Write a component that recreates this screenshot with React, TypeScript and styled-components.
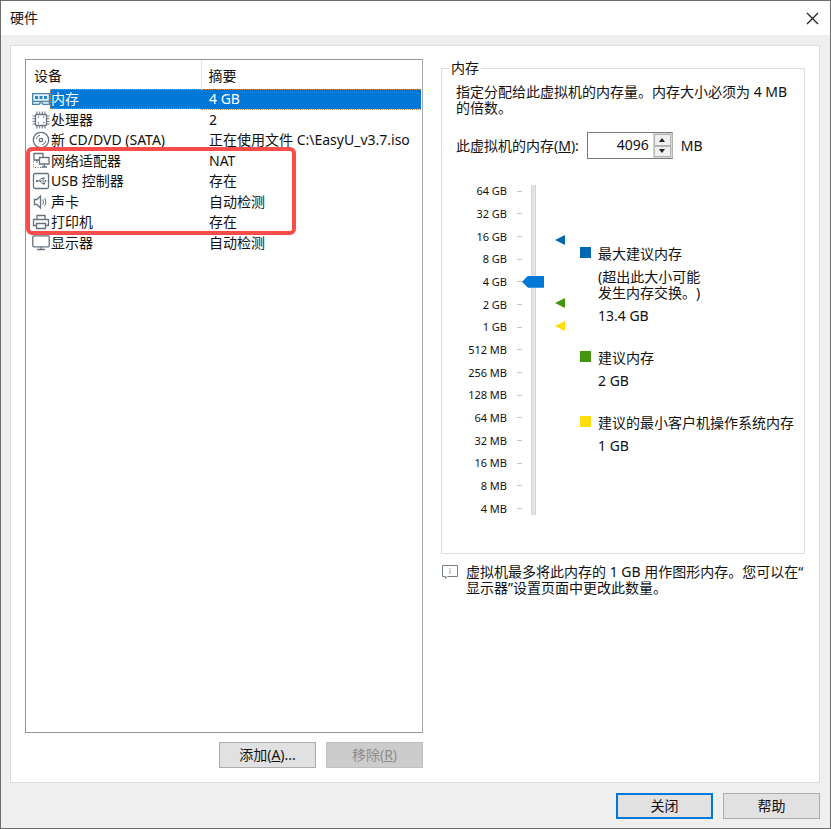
import React, { useState } from "react";
import styled, { createGlobalStyle, css } from "styled-components";

const GlobalStyle = createGlobalStyle`
  * { box-sizing: border-box; }
  body { margin: 0; }
  body, button, input {
    font-family: "Noto Sans", "Noto Sans CJK SC", sans-serif;
    font-size: 14px;
    line-height: 16px;
    color: #111;
    text-spacing-trim: space-all;
  }
`;

const Dialog = styled.main`
  display: flex;
  flex-direction: column;
  min-height: 100vh;
  background: #efefef;
  border: 1px solid #6c6c6c;
`;

const TitleBar = styled.header`
  display: flex;
  align-items: center;
  justify-content: space-between;
  height: 34px;
  padding: 0 11px 0 9px;
  background: #fff;
`;

const Title = styled.h1`
  margin: 0;
  font-size: 14px;
  font-weight: 400;
`;

const CloseIconButton = styled.button`
  display: flex;
  padding: 0;
  border: 0;
  background: none;
`;

const Panel = styled.div`
  flex: 1;
  display: grid;
  grid-template-columns: minmax(0, 398fr) minmax(0, 364fr);
  gap: 18px;
  margin: 10px 10px 0 9px;
  padding: 13px 14px 14px;
  background: #fff;
  border: 1px solid #dcdcdc;
`;

const DeviceColumn = styled.section`
  display: flex;
  flex-direction: column;
  gap: 9px;
`;

const DeviceList = styled.div`
  position: relative;
  flex: 1;
  border: 1px solid #8b929b;
  border-right-color: #a4a9b0;
  padding: 0 1px;
`;

const DeviceTable = styled.table`
  width: 100%;
  border-collapse: collapse;
  table-layout: fixed;
  white-space: nowrap;
`;

const HeadCell = styled.th<{ $divided?: boolean }>`
  height: 29px;
  padding: 3px 7px 0;
  font-weight: 400;
  text-align: left;
  ${(p) => p.$divided && css`border-left: 1px solid #e2e2e2;`}
`;

const DeviceRow = styled.tr`
  height: 20px;
  &:nth-child(even) { height: 21px; }
`;

const NameCell = styled.td`
  padding: 0 0 0 5px;
`;

const NameLine = styled.div`
  display: flex;
  align-items: center;
`;

const DeviceName = styled.span<{ $selected?: boolean }>`
  flex: 1;
  padding: 2px 0 2px 1px;
  ${(p) => p.$selected && css`
    color: #fff;
    background: #0078d7;
    outline: 1px dotted #d58a4a;
    outline-offset: -1px;
    clip-path: inset(0 1px 0 0);
    margin-right: -1px;
  `}
`;

const SummaryCell = styled.td<{ $selected?: boolean }>`
  padding: 0 0 0 8px;
  ${(p) => p.$selected && css`
    color: #fff;
    background: #0078d7;
    border-top: 1px dotted #d58a4a;
    border-bottom: 1px dotted #d58a4a;
  `}
`;

const Highlight = styled.div`
  position: absolute;
  left: 0;
  top: 87px;
  width: 270px;
  height: 88px;
  border: 4px solid #fa4c49;
  border-radius: 6px;
  pointer-events: none;
`;

const ButtonRow = styled.div`
  display: flex;
  justify-content: flex-end;
  gap: 10px;
`;

const PushButton = styled.button<{ $primary?: boolean }>`
  width: 97px;
  height: 26px;
  padding: 0;
  background: #e1e1e1;
  border: ${(p) => (p.$primary ? "2px solid #0078d7" : "1px solid #adadad")};
  &:disabled {
    color: #8c8c8c;
    background: #cccccc;
    border-color: #bfbfbf;
  }
`;

const Footer = styled.footer`
  display: flex;
  justify-content: flex-end;
  gap: 10px;
  padding: 10px 10px 9px;
`;

const SettingsColumn = styled.section`
  display: flex;
  flex-direction: column;
  gap: 10px;
  white-space: nowrap;
`;

const MemoryGroup = styled.fieldset`
  min-width: 0;
  height: 494px;
  margin: 1px 0 0;
  padding: 8px 4px 0 14px;
  border: 1px solid #dcdcdc;
`;

const GroupTitle = styled.legend`
  margin-left: -7px;
  padding: 0 2px;
`;

const Text = styled.p`
  margin: 0;
`;

const MemoryField = styled.div`
  display: flex;
  align-items: center;
  gap: 8px;
  margin: 16px 0 21px;
`;

const NumberBox = styled.div`
  display: flex;
  width: 86px;
  height: 27px;
  border: 1px solid #7a7a7a;
  border-right-color: #b4b4b4;
`;

const NumberInput = styled.input`
  flex: 1;
  min-width: 0;
  padding: 0 4px 2px;
  border: 0;
  text-align: right;
`;

const Spinner = styled.div`
  display: flex;
  flex-direction: column;
  width: 19px;
  padding: 1px;
  background: #d4d4dc;
`;

const SpinButton = styled.button`
  flex: 1;
  display: flex;
  align-items: center;
  justify-content: center;
  padding: 0;
  background: #f0f0f0;
  border: 1px solid #b4b4b4;
`;

const MemoryScale = styled.div`
  display: flex;
  height: 340px;
`;

const ScaleLabels = styled.div`
  flex: none;
  display: grid;
  grid-auto-rows: 1fr;
  width: 66px;
`;

const ScaleLabel = styled.div`
  display: flex;
  align-items: center;
  justify-content: flex-end;
  gap: 10px;
  font-size: 11px;
  &::after {
    content: "";
    width: 5px;
    height: 1px;
    background: #c4c4c4;
  }
`;

const MemorySlider = styled.input`
  appearance: none;
  flex: none;
  writing-mode: vertical-lr;
  direction: rtl;
  width: 22px;
  height: 330px;
  margin: 5px 0;
  background: linear-gradient(90deg, transparent 9px, #d4d7d7 9px 10px, #dfe4e3 10px 13px, #d4d7d7 13px 14px, transparent 14px);
  &::-webkit-slider-thumb {
    appearance: none;
    width: 22px;
    height: 12px;
    background: #0078d7;
    clip-path: polygon(0 50%, 6px 0, 100% 0, 100% 100%, 6px 100%);
  }
`;

const Markers = styled.svg`
  flex: none;
  margin-left: 11px;
`;

const Legend = styled.ul`
  display: flex;
  flex-direction: column;
  gap: 26px;
  margin: 66px 0 0 15px;
  padding: 0;
  list-style: none;
`;

const LegendItem = styled.li<{ $color: string }>`
  display: grid;
  grid-template-columns: 11px auto;
  column-gap: 7px;
  row-gap: 7px;
  &::before {
    content: "";
    width: 11px;
    height: 11px;
    margin-top: 1px;
    background: ${(p) => p.$color};
  }
  & > * { grid-column: 2; }
`;

const Note = styled.div`
  display: flex;
  gap: 8px;
`;

type DeviceKind = "memory" | "cpu" | "disc" | "network" | "usb" | "sound" | "printer" | "display";

const glyphs: Record<DeviceKind, React.ReactNode> = {
  memory: (
    <>
      <path d="M.6 3.600h16.800v10.800H11l-1-1.500H8l-1 1.500H.6z" fill="#e3f1fa" stroke="#4a86ad" />
      <path d="M3 6h3v3H3zM7.500 6h3v3h-3zM12 6h3v3h-3z" fill="#2986c6" stroke="none" />
      <path d="M1 11.400h16" stroke="#4a86ad" />
    </>
  ),
  cpu: (
    <>
      <rect x="3.500" y="3.500" width="11" height="11" rx="1" />
      <path d="M6 6h1M11 6h1M6 12h1M12 11v1" strokeWidth="1.500" />
      <path d="M5 .5v3M7.700.500v3M10.400.500v3M13 .5v3M5 14.500v3M7.700 14.500v3M10.400 14.500v3M13 14.500v3M.5 5h3M.5 7.700h3M.5 10.400h3M.5 13h3M14.500 5h3M14.500 7.700h3M14.500 10.400h3M14.500 13h3" strokeWidth="1" />
    </>
  ),
  disc: (
    <>
      <circle cx="9" cy="9" r="7.700" />
      <circle cx="9" cy="9" r="1.700" />
      <path d="M4.200 8Q4.600 5 8 4.300M13.800 10q-.4 3-3.800 3.700" strokeWidth="1" />
    </>
  ),
  network: (
    <>
      <path d="M2 1.500h9v6.500H2zM5 8v2.500" />
      <path d="M7.500 5.500h9.500v6.500H7.500z" fill="#fff" />
      <path d="M12.200 12v2.500M9.500 15h5.500" />
      <path d="M1.500 9.500v6.500M3 15.500h6" strokeDasharray="1 1.500" strokeWidth="1" />
    </>
  ),
  usb: (
    <>
      <rect x="1.500" y="1.500" width="15" height="15" rx="1.500" />
      <path d="M5 9h9M7 9l2-2.500h2M8 9l2 2.500h2" strokeWidth="1" />
      <path d="M4 8h2v2H4zM10.500 5.500h2v2h-2zM11 10.500h2v2h-2zM13 8l2 1-2 1z" fill="#66727e" stroke="none" />
    </>
  ),
  sound: (
    <>
      <path d="M2.500 6.500h2.500l3.500-3.500v12l-3.500-3.500H2.500z" />
      <path d="M10.800 6.500q1.300 2.500 0 5M12.800 5q2.200 4 0 8" strokeWidth="1" />
    </>
  ),
  printer: (
    <>
      <path d="M5 6.500V2.500h8v4M4.500 12.500h-3v-6h15v6h-3" />
      <path d="M4.500 10.500h9v5h-9z" />
    </>
  ),
  display: (
    <>
      <rect x=".8" y="1.800" width="16.400" height="11" rx="1" />
      <path d="M9 13v2M5 15.500h8" />
    </>
  ),
};

const DeviceIcon = ({ kind }: { kind: DeviceKind }) => (
  <svg width="18" height="18" viewBox="0 0 18 18" fill="none" stroke="#66727e" strokeWidth="1.300" aria-hidden="true">
    {glyphs[kind]}
  </svg>
);

const devices: { kind: DeviceKind; name: string; summary: string }[] = [
  { kind: "memory", name: "内存", summary: "4 GB" },
  { kind: "cpu", name: "处理器", summary: "2" },
  { kind: "disc", name: "新 CD/DVD (SATA)", summary: "正在使用文件 C:\\EasyU_v3.7.iso" },
  { kind: "network", name: "网络适配器", summary: "NAT" },
  { kind: "usb", name: "USB 控制器", summary: "存在" },
  { kind: "sound", name: "声卡", summary: "自动检测" },
  { kind: "printer", name: "打印机", summary: "存在" },
  { kind: "display", name: "显示器", summary: "自动检测" },
];

const scale = [
  "64 GB", "32 GB", "16 GB", "8 GB", "4 GB", "2 GB", "1 GB", "512 MB",
  "256 MB", "128 MB", "64 MB", "32 MB", "16 MB", "8 MB", "4 MB",
];

export default function App() {
  const [step, setStep] = useState(10);
  const memory = 4 * 2 ** step;
  const move = (delta: number) => setStep((s) => Math.min(14, Math.max(0, s + delta)));

  return (
    <>
      <GlobalStyle />
      <Dialog>
        <TitleBar>
          <Title>硬件</Title>
          <CloseIconButton aria-label="关闭窗口">
            <svg width="13" height="13" viewBox="0 0 13 13" stroke="#222" strokeWidth="1.300">
              <path d="M1 1l11 11M12 1L1 12" />
            </svg>
          </CloseIconButton>
        </TitleBar>
        <Panel>
          <DeviceColumn>
            <DeviceList>
              <DeviceTable>
                <colgroup>
                  <col width="174" />
                  <col />
                </colgroup>
                <thead>
                  <tr>
                    <HeadCell scope="col">设备</HeadCell>
                    <HeadCell scope="col" $divided>摘要</HeadCell>
                  </tr>
                </thead>
                <tbody>
                  {devices.map((d, i) => (
                    <DeviceRow key={d.kind}>
                      <NameCell>
                        <NameLine>
                          <DeviceIcon kind={d.kind} />
                          <DeviceName $selected={i === 0}>{d.name}</DeviceName>
                        </NameLine>
                      </NameCell>
                      <SummaryCell $selected={i === 0}>{d.summary}</SummaryCell>
                    </DeviceRow>
                  ))}
                </tbody>
              </DeviceTable>
              <Highlight />
            </DeviceList>
            <ButtonRow>
              <PushButton>添加(<u>A</u>)...</PushButton>
              <PushButton disabled>移除(<u>R</u>)</PushButton>
            </ButtonRow>
          </DeviceColumn>
          <SettingsColumn>
            <MemoryGroup>
              <GroupTitle>内存</GroupTitle>
              <Text>
                指定分配给此虚拟机的内存量。内存大小必须为 4 MB
                <br />
                的倍数。
              </Text>
              <MemoryField>
                <label htmlFor="memory">此虚拟机的内存(<u>M</u>):</label>
                <NumberBox>
                  <NumberInput id="memory" value={memory} readOnly />
                  <Spinner>
                    <SpinButton aria-label="增加" onClick={() => move(1)}>
                      <svg width="6" height="4" viewBox="0 0 6 4"><path d="M3 0l3 4H0z" fill="#222" /></svg>
                    </SpinButton>
                    <SpinButton aria-label="减少" onClick={() => move(-1)}>
                      <svg width="6" height="4" viewBox="0 0 6 4"><path d="M0 0h6L3 4z" fill="#222" /></svg>
                    </SpinButton>
                  </Spinner>
                </NumberBox>
                <span>MB</span>
              </MemoryField>
              <MemoryScale>
                <ScaleLabels>
                  {scale.map((s) => <ScaleLabel key={s}>{s}</ScaleLabel>)}
                </ScaleLabels>
                <MemorySlider
                  type="range"
                  aria-label="内存大小"
                  min={0}
                  max={14}
                  value={step}
                  onChange={(e) => setStep(Number(e.target.value))}
                />
                <Markers width="10" height="340" viewBox="0 0 10 340" aria-hidden="true">
                  <path d="M0 60l10-5v10z" fill="#0068b0" />
                  <path d="M0 123l10-5v10z" fill="#43960f" />
                  <path d="M0 146l10-5v10z" fill="#ffdc0a" />
                </Markers>
                <Legend>
                  <LegendItem $color="#0068b0">
                    <Text>最大建议内存</Text>
                    <Text>(超出此大小可能<br />发生内存交换。)</Text>
                    <Text>13.4 GB</Text>
                  </LegendItem>
                  <LegendItem $color="#43960f">
                    <Text>建议内存</Text>
                    <Text>2 GB</Text>
                  </LegendItem>
                  <LegendItem $color="#ffdc0a">
                    <Text>建议的最小客户机操作系统内存</Text>
                    <Text>1 GB</Text>
                  </LegendItem>
                </Legend>
              </MemoryScale>
            </MemoryGroup>
            <Note>
              <svg width="17" height="16" viewBox="0 0 17 16" fill="none" stroke="#74828e" aria-hidden="true">
                <path d="M1.500 1.500h15v11H6.500l-2 2v-2h-3z" />
                <path d="M9 6v4M9 4v1" stroke="#93a3b0" />
              </svg>
              <Text>
                虚拟机最多将此内存的 1 GB 用作图形内存。您可以在“
                <br />
                显示器”设置页面中更改此数量。
              </Text>
            </Note>
          </SettingsColumn>
        </Panel>
        <Footer>
          <PushButton $primary>关闭</PushButton>
          <PushButton>帮助</PushButton>
        </Footer>
      </Dialog>
    </>
  );
}
